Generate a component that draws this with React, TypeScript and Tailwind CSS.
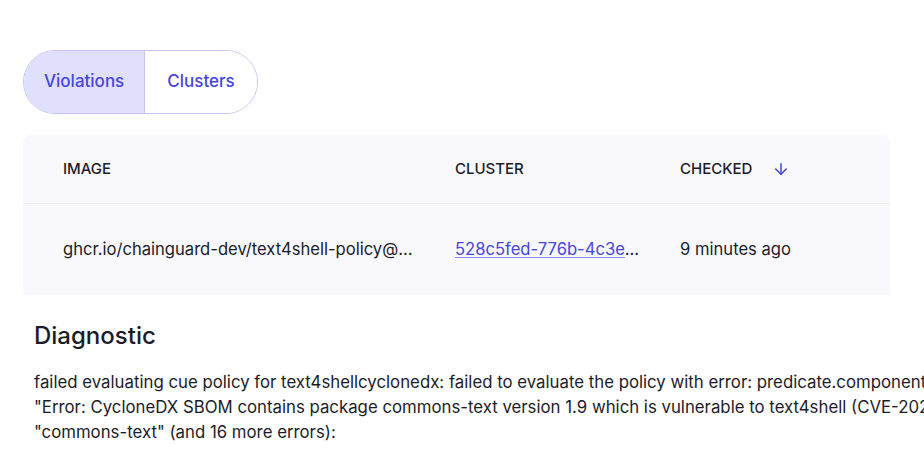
import { ArrowDown } from 'lucide-react';

const rows = [
  {
    image: 'ghcr.io/chainguard-dev/text4shell-policy@sha256:0f9a5c7b2e4d1f3a6b8c9d0e1f2a3b4c5d6e7f8091a2b3c4d5e6f708192a3b4c',
    cluster: '528c5fed-776b-4c3e-9a1d-4f5b6c7d8e9f',
    checked: '9 minutes ago',
  },
];

const diagnostic = [
  'failed evaluating cue policy for text4shellcyclonedx: failed to evaluate the policy with error: predicate.components.0.version: invalid value "1.9" (out of bound !="1.9"):',
  '"Error: CycloneDX SBOM contains package commons-text version 1.9 which is vulnerable to text4shell (CVE-2022-42889)" for package',
  '"commons-text" (and 16 more errors):',
];

const App = () => {
  return (
    <div className="min-h-screen w-full overflow-hidden bg-white px-[23px] pt-[50px] font-['Inter',sans-serif] text-[#1c1c29]">
      {/* tabs */}
      <div className="flex w-fit overflow-hidden rounded-full border border-[#c5c5f7]">
        <button className="h-[62px] bg-[#e0e0fd] px-5 text-[17px] font-medium text-[#4745e0]">Violations</button>
        <button className="h-[62px] border-l border-[#c5c5f7] bg-white px-[22px] text-[17px] font-medium text-[#4745e0]">
          Clusters
        </button>
      </div>

      {/* table */}
      <div className="mt-[21px] w-[867px] rounded-t-lg bg-[#f8f8fd]">
        <div className="grid h-[69px] grid-cols-[412px_225px_1fr] items-center border-b border-[#ececfb] text-[15px] font-medium">
          <div className="pl-10 pr-5">IMAGE</div>
          <div className="px-5">CLUSTER</div>
          <div className="flex items-center gap-5 px-5">
            CHECKED
            <ArrowDown size={18} strokeWidth={2} className="text-[#4745e0]" />
          </div>
        </div>
        {rows.map((row) => (
          <div key={row.cluster} className="grid h-[91px] grid-cols-[412px_225px_1fr] items-center text-[16.6px]">
            <div className="truncate pl-10 pr-5">{row.image}</div>
            <div className="truncate px-5">
              <a href="#" className="text-[#4745e0] underline decoration-[#8b89ee] underline-offset-2">
                {row.cluster}
              </a>
            </div>
            <div className="px-5">{row.checked}</div>
          </div>
        ))}
      </div>

      {/* diagnostic */}
      <div className="px-[11px] pt-[25px]">
        <h2 className="text-[24px] font-medium leading-[32px]">Diagnostic</h2>
        <div className="mt-[18px] text-[16.8px] leading-[25px]">
          {diagnostic.map((line, i) => (
            <p key={i} className="whitespace-pre">
              {line}
            </p>
          ))}
        </div>
      </div>
    </div>
  );
};

export default App;
